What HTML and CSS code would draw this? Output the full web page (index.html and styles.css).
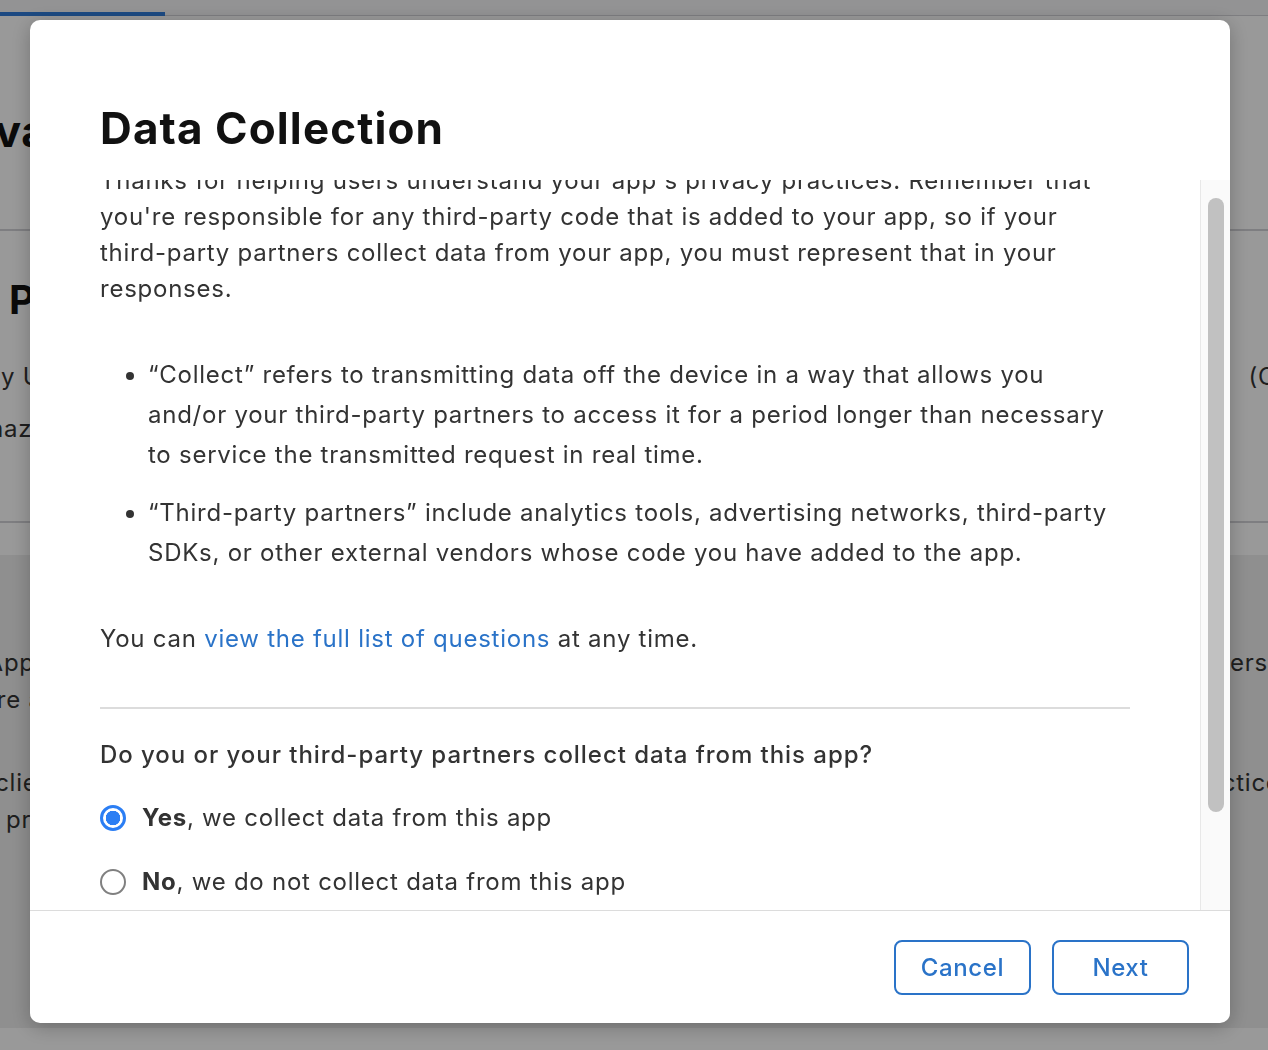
FILE: index.html
```html
<!DOCTYPE html>
<html lang="en">
<head>
  <meta charset="UTF-8" />
  <meta name="viewport" content="width=device-width, initial-scale=1.0" />
  <title>App Privacy - Data Collection</title>
  <link rel="stylesheet" href="styles.css">
</head>

<body>

  <div class="page">
    <div class="topbar">
      <div class="tab-active"></div>
    </div>

    <div class="page-head">
      <h1 class="page-title">App Privacy</h1>
    </div>

    <section class="policy">
      <h2 class="policy-title">Privacy Policy</h2>
      <div class="policy-row">
        <span class="policy-label">Privacy Policy URL</span>
        <span class="policy-hint">(Optional)</span>
      </div>
      <div class="policy-value">https://www.amazon.com/privacy</div>
    </section>

    <section class="practices">
      <div class="practice-row">
        <span class="practice-left">Your App</span>
        <span class="practice-right">partners</span>
      </div>
      <div class="practice-row">
        <span class="practice-left">you're about</span>
      </div>
      <div class="practice-row gap">
        <span class="practice-left">include clients</span>
        <span class="practice-right">practices</span>
      </div>
      <div class="practice-row">
        <span class="practice-left">privacy</span>
      </div>
    </section>
  </div>

  <div class="overlay"></div>

  <div class="modal">
    <div class="modal-head">
      <h2>Data Collection</h2>
    </div>

    <div class="modal-body">
      <div class="modal-scroll">
        <div class="modal-content">
          <p>Thanks for helping users understand your app's privacy practices. Remember that you're responsible for any third-party code that is added to your app, so if your third-party partners collect data from your app, you must represent that in your responses.</p>

          <ul class="notes">
            <li>“Collect” refers to transmitting data off the device in a way that allows you and/or your third-party partners to access it for a period longer than necessary to service the transmitted request in real time.</li>
            <li>“Third-party partners” include analytics tools, advertising networks, third-party SDKs, or other external vendors whose code you have added to the app.</li>
          </ul>

          <p>You can <a href="#">view the full list of questions</a> at any time.</p>

          <hr class="divider" />

          <div class="question">Do you or your third-party partners collect data from this app?</div>

          <label class="choice">
            <span class="radio checked"></span>
            <span><b>Yes</b>, we collect data from this app</span>
          </label>
          <label class="choice">
            <span class="radio"></span>
            <span><b>No</b>, we do not collect data from this app</span>
          </label>
        </div>
      </div>

      <div class="scrollbar">
        <div class="scrollbar-thumb"></div>
      </div>
    </div>

    <div class="modal-foot">
      <button class="btn">Cancel</button>
      <button class="btn">Next</button>
    </div>
  </div>

</body>
</html>
```

FILE: styles.css
```css
body {
  margin: 0;
  padding: 0;
  height: 1050px;
  overflow: hidden;
  background: #fff;
  font-family: 'Inter', 'Noto Sans', sans-serif;
  color: #333;
  letter-spacing: 0.75px;
}

/* page behind the dialog */
.page {
  height: 1050px;
  display: flex;
  flex-direction: column;
}

.topbar {
  height: 15px;
  background: #f5f5f7;
  border-bottom: 1px solid #d2d2d7;
  position: relative;
}

.tab-active {
  position: absolute;
  left: 0;
  bottom: -1px;
  width: 165px;
  height: 4px;
  background: #2f7bd9;
}

.page-head {
  height: 215px;
  padding-top: 16px;
  box-sizing: border-box;
  border-bottom: 2px solid #d2d2d7;
  display: flex;
  align-items: center;
}

.page-title {
  margin: 0 0 0 -168px;
  font-size: 44px;
  font-weight: 700;
  color: #111;
}

.policy {
  height: 292px;
  border-bottom: 2px solid #d2d2d7;
  padding-top: 45px;
  box-sizing: border-box;
}

.policy-title {
  margin: 0 0 35px 9px;
  font-size: 40px;
  line-height: 48px;
  font-weight: 700;
  color: #111;
}

.policy-row {
  display: flex;
  justify-content: space-between;
  font-size: 24px;
  line-height: 36px;
}

.policy-label {
  margin-left: -154px;
}

.policy-hint {
  margin-right: -100px;
}

.policy-value {
  margin: 16px 0 0 -186px;
  font-size: 24px;
  line-height: 36px;
}

.practices {
  margin-top: 32px;
  height: 473px;
  background: #eeeeee;
  padding-top: 89px;
  box-sizing: border-box;
  font-size: 24px;
  line-height: 37px;
}

.practice-row {
  display: flex;
  justify-content: space-between;
}

.practice-row.gap {
  margin-top: 46px;
}

.practice-left {
  margin-left: -76px;
}

.practice-row:nth-child(2) .practice-left {
  margin-left: -55px;
}

.practice-row:nth-child(3) .practice-left {
  margin-left: -100px;
}

.practice-row:nth-child(4) .practice-left {
  margin-left: 6px;
}

.practice-right {
  margin-right: 0;
}

.practice-row.gap .practice-right {
  margin-right: -26px;
}

.overlay {
  position: fixed;
  inset: 0;
  background: rgba(0, 0, 0, 0.4);
}

/* dialog */
.modal {
  position: fixed;
  left: 30px;
  top: 20px;
  width: 1200px;
  height: 1003px;
  background: #fff;
  border-radius: 10px;
  box-shadow: 0 4px 20px rgba(0, 0, 0, 0.25);
  display: flex;
  flex-direction: column;
  overflow: hidden;
}

.modal-head {
  height: 160px;
  flex-shrink: 0;
  padding: 82px 70px 0;
  box-sizing: border-box;
}

.modal-head h2 {
  margin: 0;
  font-size: 44px;
  line-height: 52px;
  font-weight: 700;
  color: #111;
  letter-spacing: 1.1px;
}

.modal-body {
  flex: 1;
  display: flex;
  min-height: 0;
}

.modal-scroll {
  flex: 1;
  overflow: hidden;
  padding: 0 70px;
}

/* content is scrolled down a little */
.modal-content {
  margin-top: -17px;
  font-size: 24px;
  line-height: 36px;
}

.modal-content p {
  margin: 0;
}

.modal-content a {
  color: #2a73c8;
  text-decoration: none;
}

.notes {
  margin: 48px 0;
  padding-left: 48px;
}

.notes li {
  line-height: 40px;
}

.notes li + li {
  margin-top: 18px;
}

.divider {
  margin: 50px 0 28px;
  border: none;
  border-top: 2px solid #dcdcdc;
}

.question {
  font-weight: 500;
  letter-spacing: 0.95px;
}

.choice {
  display: flex;
  align-items: center;
  gap: 16px;
  height: 40px;
  margin-top: 24px;
}

.question + .choice {
  margin-top: 25px;
}

.radio {
  width: 26px;
  height: 26px;
  box-sizing: border-box;
  border-radius: 50%;
  border: 2px solid #808080;
  flex-shrink: 0;
}

.radio.checked {
  border: 3px solid #2b7ef4;
  background: radial-gradient(circle, #2b7ef4 0 7px, #fff 7.5px);
}

.choice b {
  font-weight: 700;
}

.scrollbar {
  width: 30px;
  box-sizing: border-box;
  border-left: 1px solid #e8e8e8;
  background: #fafafa;
  padding: 18px 6px 0 7px;
}

.scrollbar-thumb {
  height: 614px;
  background: #c1c1c1;
  border-radius: 8px;
}

.modal-foot {
  height: 113px;
  flex-shrink: 0;
  box-sizing: border-box;
  border-top: 1px solid #dcdcdc;
  display: flex;
  justify-content: flex-end;
  align-items: center;
  gap: 21px;
  padding-right: 41px;
}

.btn {
  width: 137px;
  height: 55px;
  border: 2px solid #2a73c8;
  border-radius: 8px;
  background: #fff;
  color: #2a73c8;
  font-family: 'Inter', 'Noto Sans', sans-serif;
  font-size: 24px;
  font-weight: 500;
  letter-spacing: 0.6px;
  cursor: pointer;
}
```
